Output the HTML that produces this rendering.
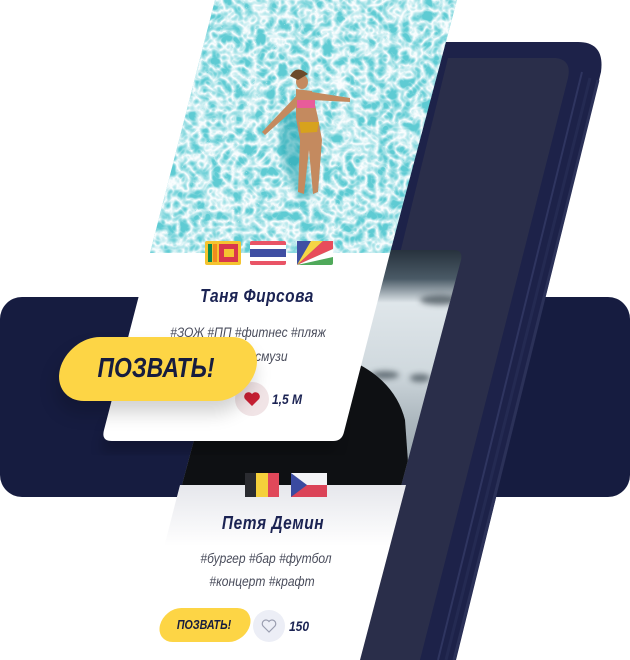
<!DOCTYPE html>
<html><head><meta charset="utf-8">
<style>
html,body{margin:0;padding:0;background:#fff;}
body{width:630px;height:660px;position:relative;overflow:hidden;font-family:"Liberation Sans","DejaVu Sans",sans-serif;}
.t{position:absolute;font-style:italic;white-space:nowrap;transform:translateX(-50%) scaleX(0.86);}
.name{font-weight:bold;color:#1b2353;font-size:18px;letter-spacing:0.6px;}
.tag{color:#4a4d5c;font-size:14px;}
.btn{position:absolute;background:#fdd545;transform:skewX(-14deg);}
.bt{position:absolute;font-style:italic;font-weight:bold;color:#161c3f;white-space:nowrap;transform:translateX(-50%) scaleX(0.82);}
</style></head><body>
<svg width="630" height="660" style="position:absolute;left:0;top:0">
<defs>
<filter id="wt" x="0" y="0" width="100%" height="100%">
<feTurbulence type="turbulence" baseFrequency="0.09" numOctaves="2" seed="7" result="n"/>
<feColorMatrix in="n" type="matrix" values="0 0 0 0 0.95  0 0 0 0 0.98  0 0 0 0 0.99  -2.2 0 0 0 1.1"/>
</filter>
<linearGradient id="man" x1="0" y1="0" x2="0" y2="1">
<stop offset="0" stop-color="#27323d"/><stop offset="0.12" stop-color="#4a5a66"/>
<stop offset="0.22" stop-color="#dfe6ea"/><stop offset="0.5" stop-color="#d0d9de"/>
<stop offset="0.7" stop-color="#aeb9c0"/><stop offset="1" stop-color="#8d9aa2"/></linearGradient>
<linearGradient id="c2" x1="0" y1="0" x2="0" y2="1">
<stop offset="0" stop-color="#e6e7ec"/><stop offset="0.35" stop-color="#fff"/></linearGradient>
<filter id="sh"><feGaussianBlur stdDeviation="6"/></filter>
<filter id="bl"><feGaussianBlur stdDeviation="3"/></filter>
<clipPath id="img1"><path d="M215 0 L457 0 L390 253 L150 253 Z"/></clipPath>
<clipPath id="img2"><path d="M245 250 L454 250 Q463 250 461 260 L355 660 L135 660 Z"/></clipPath>
</defs>
<rect x="0" y="297" width="630" height="200" rx="22" fill="#161c40"/>
<path d="M445 42 L578 42 Q605 42 601 72 L456 660 L270 660 Z" fill="#1d2249"/>
<path d="M598 80 L454 660" stroke="#2b3158" stroke-width="3"/>
<path d="M590 78 L446 660" stroke="#242a52" stroke-width="3"/>
<path d="M582 72 L438 660" stroke="#2f3560" stroke-width="2"/>
<path d="M448 58 L556 58 Q572 60 568 78 L420 660 L300 660 Z" fill="#2a2e4a"/>
<g clip-path="url(#img2)">
<rect x="130" y="250" width="340" height="240" fill="url(#man)"/>
<g filter="url(#bl)" fill="#3a4650" opacity="0.7">
<ellipse cx="385" cy="375" rx="14" ry="4"/><ellipse cx="420" cy="378" rx="10" ry="4"/><ellipse cx="440" cy="300" rx="20" ry="5"/>
</g>
<path d="M170 490 Q200 400 260 370 Q300 350 350 360 Q395 380 405 420 L410 490 Z" fill="#0e1013"/>
</g>
<path d="M180 485 L406 485 L360 660 L135 660 Z" fill="url(#c2)"/>
<path d="M110 420 L340 420 L335 452 L100 452 Z" fill="#000" opacity="0.2" filter="url(#sh)"/>
<g clip-path="url(#img1)">
<rect x="140" y="0" width="330" height="260" fill="#5ecbd3"/>
<rect x="140" y="0" width="330" height="260" filter="url(#wt)"/>
<path d="M285 110 Q270 150 300 200 L315 195 Q300 150 310 110 Z" fill="#2aa8b4" opacity="0.6" filter="url(#bl)"/>
<g fill="#c48a5f">
<ellipse cx="302" cy="82" rx="6" ry="7"/>
<path d="M296 89 L312 91 L318 118 L322 140 L318 192 L313 194 L309 150 L304 194 L298 192 L300 140 L296 118 Z"/>
<path d="M298 94 L262 132 L265 135 L302 102 Z"/>
<path d="M312 92 L350 98 L350 102 L312 100 Z"/>
</g>
<path d="M297 100 L315 100 L315 108 L297 108 Z" fill="#e85c9a"/>
<path d="M299 122 L319 122 L317 132 L301 133 Z" fill="#d7a21d"/>
<path d="M290 76 Q296 64 308 74 L298 80 Z" fill="#6b4a2a"/>
</g>
<path d="M150 253 L390 253 L344 432 Q342 441 333 441 L112 441 Q101 441 104 430 Z" fill="#fff"/>
<g transform="translate(205,241)">
<rect width="36" height="24" rx="2" fill="#f4c430"/>
<rect x="3" y="3" width="4" height="18" fill="#0b8a4a"/><rect x="8" y="3" width="4" height="18" fill="#f08c1d"/>
<rect x="14" y="3" width="19" height="18" fill="#d9374c"/>
<rect x="19" y="8" width="10" height="8" fill="#f4c430"/>
</g>
<g transform="translate(250,241)">
<rect width="36" height="24" rx="2" fill="#e95466"/>
<rect y="4" width="36" height="16" fill="#fff"/><rect y="8" width="36" height="8" fill="#3f4fa3"/>
</g>
<g transform="translate(297,241)">
<rect width="36" height="24" rx="2" fill="#4fa95a"/>
<path d="M0 24 L0 0 L14 0 Z" fill="#3f4fa3"/><path d="M0 24 L14 0 L26 0 Z" fill="#f5d545"/>
<path d="M0 24 L26 0 L36 0 L36 8 Z" fill="#e84c5b"/><path d="M0 24 L36 8 L36 16 Z" fill="#fff"/>
</g>
<g transform="translate(245,473)">
<rect width="11" height="24" fill="#2a2b30"/><rect x="11" width="12" height="24" fill="#f5d03b"/><rect x="23" width="11" height="24" fill="#e0485a"/>
</g>
<g transform="translate(291,473)">
<rect width="36" height="12" fill="#f3f3f6"/><rect y="12" width="36" height="12" fill="#db4358"/>
<path d="M0 0 L16 12 L0 24 Z" fill="#3a4aa0"/>
</g>
<circle cx="252" cy="399" r="17" fill="#f1e4e6"/>
<path d="M252 406 L245 399 A3.6 3.6 0 0 1 252 394 A3.6 3.6 0 0 1 259 399 Z" fill="#c81f33"/>
<circle cx="269" cy="626" r="16" fill="#eceef6"/>
<path d="M269 632 L263 626 A3.2 3.2 0 0 1 269 621.5 A3.2 3.2 0 0 1 275 626 Z" fill="none" stroke="#9a9eb0" stroke-width="1.2"/>
</svg>

<div class="t name" style="left:257px;top:286px;">Таня Фирсова</div>
<div class="t tag" style="left:248px;top:324px;">#ЗОЖ #ПП #фитнес #пляж</div>
<div class="t tag" style="left:268px;top:348px;">#смузи</div>
<div class="t" style="left:287px;top:391px;font-size:14px;font-weight:bold;color:#1b2353;">1,5 М</div>

<div class="btn" style="left:60px;top:337px;width:196px;height:64px;border-radius:32px;box-shadow:0 12px 18px rgba(0,0,0,0.18);"></div>
<div class="bt" style="left:156px;top:352px;font-size:28px;">ПОЗВАТЬ!</div>

<div class="t name" style="left:273px;top:513px;">Петя Демин</div>
<div class="t tag" style="left:266px;top:550px;">#бургер #бар #футбол</div>
<div class="t tag" style="left:262px;top:573px;">#концерт #крафт</div>
<div class="btn" style="left:160px;top:608px;width:90px;height:34px;border-radius:17px;"></div>
<div class="bt" style="left:204px;top:617px;font-size:13px;">ПОЗВАТЬ!</div>
<div class="t" style="left:299px;top:618px;font-size:14px;font-weight:bold;color:#1b2353;">150</div>
</body></html>
